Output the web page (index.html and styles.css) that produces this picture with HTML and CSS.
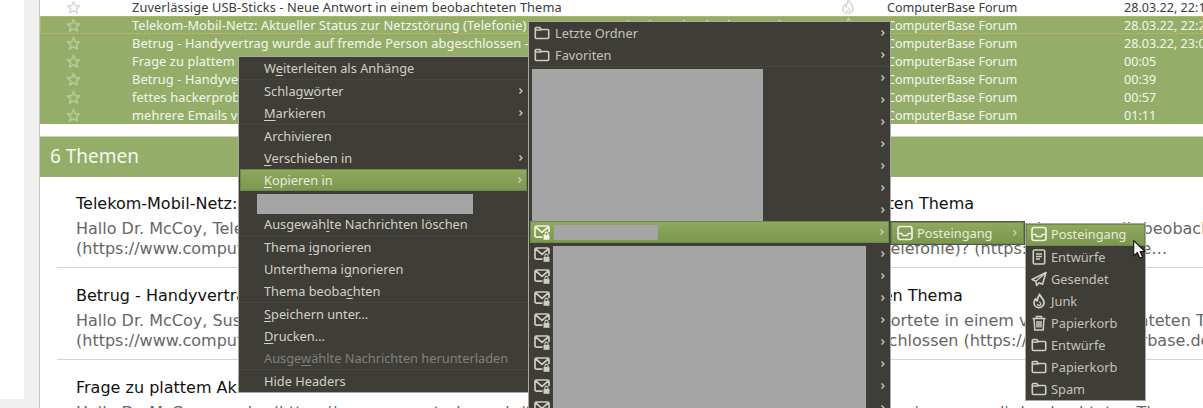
FILE: index.html
```html
<!DOCTYPE html>
<html lang="de">
<head>
<meta charset="utf-8">
<title>Thunderbird</title>
<link rel="stylesheet" href="styles.css">
</head>
<body>
<svg class="defs" width="0" height="0">
  <symbol id="star" viewBox="0 0 16 16"><path d="M8 1.6l1.9 4.3 4.6.4-3.5 3 1.1 4.6L8 11.4l-4.1 2.5L5 9.300 1.500 6.300l4.600-.4z" fill="none" stroke="currentColor" stroke-width="1.900" stroke-linejoin="round"/></symbol>
  <symbol id="flame" viewBox="0 0 16 16"><path d="M8.500 1.200c.5 2.600 4.500 4.300 4.500 8.500a5 5 0 0 1-10 0c0-1.700.8-3 1.800-4 .1 1.200.7 2 1.500 2.300C6.500 6 7 3.500 8.500 1.200z" fill="none" stroke="currentColor" stroke-width="1.800" stroke-linejoin="round"/><path d="M6.300 11a1.800 1.800 0 0 0 3.500 0c0-1-.9-1.500-1.500-2.300" fill="none" stroke="currentColor" stroke-width="1.200"/></symbol>
  <symbol id="folder" viewBox="0 0 16 16"><path d="M1.300 3.500a1 1 0 0 1 1-1h3.500l1.400 2h6.500a1 1 0 0 1 1 1v7a1 1 0 0 1-1 1H2.300a1 1 0 0 1-1-1zM1.500 5h6" fill="none" stroke="currentColor" stroke-width="1.600"/></symbol>
  <symbol id="mail" viewBox="0 0 16 16"><path d="M8.500 13.200H2.500a1.500 1.500 0 0 1-1.500-1.500V3.500A1.500 1.500 0 0 1 2.500 2h11A1.500 1.500 0 0 1 15 3.500V8M1.800 3L8 8.300 14.200 3" fill="none" stroke="currentColor" stroke-width="1.700"/><path d="M9.500 11h6v4.800h-6z" fill="currentColor"/><path d="M11 11V9.700a1.500 1.500 0 0 1 3 0V11" fill="none" stroke="currentColor" stroke-width="1.200"/></symbol>
  <symbol id="inbox" viewBox="0 0 16 16"><rect x="1" y="1.500" width="14" height="13" rx="2.400" fill="none" stroke="currentColor" stroke-width="1.700"/><path d="M1.500 8.500h3.200l1.100 2h4.400l1.100-2h3.200" fill="none" stroke="currentColor" stroke-width="1.500"/></symbol>
  <symbol id="draft" viewBox="0 0 16 16"><rect x="2.300" y="1" width="11.400" height="14" rx="1.300" fill="none" stroke="currentColor" stroke-width="1.600"/><path d="M5 5h6M5 7.500h6M5 10h4" stroke="currentColor" stroke-width="1.300"/></symbol>
  <symbol id="send" viewBox="0 0 16 16"><path d="M15 1.500L1 8.500l4 1.800.6 4.200 2.600-2.800 3.300 1.500z" fill="none" stroke="currentColor" stroke-width="1.600" stroke-linejoin="round"/><path d="M15 1.500L5 10.300" stroke="currentColor" stroke-width="1.300"/></symbol>
  <symbol id="trash" viewBox="0 0 16 16"><path d="M1.500 3.500h13M5.500 3.500V1.500h5v2M3 3.500l.8 11.500h8.400L13 3.500M6 6v6.500M8 6v6.500M10 6v6.500" fill="none" stroke="currentColor" stroke-width="1.500"/></symbol>
  <symbol id="chev" viewBox="0 0 8 8"><path d="M2.500 1.500L5 4 2.500 6.500" fill="none" stroke="currentColor" stroke-width="1.300"/></symbol>
</svg>

<div class="app">
  <aside class="sidebar"><div class="sidebar-foot"></div></aside>
  <div class="gutter"></div>
  <main class="main">
    <div class="rows">
      <div class="row"><svg class="star"><use href="#star"/></svg><span class="subject">Zuverlässige USB-Sticks - Neue Antwort in einem beobachteten Thema</span><svg class="flame"><use href="#flame"/></svg><span class="sender">ComputerBase Forum</span><span class="date">28.03.22, 22:17</span></div>
      <div class="row sel focus"><svg class="star"><use href="#star"/></svg><span class="subject">Telekom-Mobil-Netz: Aktueller Status zur Netzstörung (Telefonie) - Neue Antwort in einem beobachteten Thema</span><svg class="flame"><use href="#flame"/></svg><span class="sender">ComputerBase Forum</span><span class="date">28.03.22, 22:21</span></div>
      <div class="row sel"><svg class="star"><use href="#star"/></svg><span class="subject">Betrug - Handyvertrag wurde auf fremde Person abgeschlossen - Neue Antwort in einem beobachteten Thema</span><span class="flame"></span><span class="sender">ComputerBase Forum</span><span class="date">28.03.22, 23:04</span></div>
      <div class="row sel"><svg class="star"><use href="#star"/></svg><span class="subject">Frage zu plattem Akku - Neue Antwort</span><span class="flame"></span><span class="sender">ComputerBase Forum</span><span class="date">00:05</span></div>
      <div class="row sel"><svg class="star"><use href="#star"/></svg><span class="subject">Betrug - Handyvertrag - Neue Antwort</span><span class="flame"></span><span class="sender">ComputerBase Forum</span><span class="date">00:39</span></div>
      <div class="row sel"><svg class="star"><use href="#star"/></svg><span class="subject">fettes hackerproblem - Neue Antwort</span><span class="flame"></span><span class="sender">ComputerBase Forum</span><span class="date">00:57</span></div>
      <div class="row sel"><svg class="star"><use href="#star"/></svg><span class="subject">mehrere Emails versendet - Neue Antwort</span><span class="flame"></span><span class="sender">ComputerBase Forum</span><span class="date">01:11</span></div>
    </div>
    <h2 class="count">6 Themen</h2>
    <article class="thread">
      <h3>Telekom-Mobil-Netz: Aktueller Status zur Netzstörung (Telefonie)&nbsp;&nbsp;- Neue Antwort in einem beobachteten Thema</h3>
      <p>Hallo Dr. McCoy, Telekom-Mobil-Netz: Aktueller Status zur Netzstörung (Telefonie) hat im Forum ja kurz geantwortet in einem von dir beobachteten Thema<br>(https://www.computerbase.de/forum/threads/telekom-mobil-netz-aktueller-status-netzstoerung-s-in-Telefonie)? (https://www.compute…</p>
    </article>
    <article class="thread">
      <h3>Betrug - Handyvertrag wurde auf fremde Person abgeschlossen - Neue Antwort in einem beobachteten Thema</h3>
      <p>Hallo Dr. McCoy, Susi hat in einem Beitrag geantwortet und es wurde im Forum heute dazu ja beantwortete in einem von dir beobachteten Thema<br>(https://www.computerbase.de/forum/threads/betrug-handyvertrag-wurde-auf-fremde-person-i-abgeschlossen (https://www.computerbase.de/forum</p>
    </article>
    <article class="thread">
      <h3>Frage zu plattem Akku - Neue Antwort in einem beobachteten Thema</h3>
      <p>Hallo Dr. McCoy, sascha (https://www.computerbase.de/forum/members/sascha.123456) antwortete in einem von dir beobachteten Thema</p>
    </article>
  </main>
</div>

<div class="menu menu-main">
  <div class="mi sep"><span>W<u>e</u>iterleiten als Anhänge</span></div>
  <div class="mi"><span>Schlag<u>w</u>örter</span><svg class="chev"><use href="#chev"/></svg></div>
  <div class="mi sep"><span><u>M</u>arkieren</span><svg class="chev"><use href="#chev"/></svg></div>
  <div class="mi"><span>Archivieren</span></div>
  <div class="mi"><span><u>V</u>erschieben in</span><svg class="chev"><use href="#chev"/></svg></div>
  <div class="mi hot"><span><u>K</u>opieren in</span><svg class="chev"><use href="#chev"/></svg></div>
  <div class="mi"></div>
  <div class="mi sep"><span>Ausgewäh<u>l</u>te Nachrichten löschen</span></div>
  <div class="mi"><span>Thema <u>i</u>gnorieren</span></div>
  <div class="mi"><span>Unterthema i<u>g</u>norieren</span></div>
  <div class="mi sep"><span>Thema beoba<u>c</u>hten</span></div>
  <div class="mi"><span><u>S</u>peichern unter…</span></div>
  <div class="mi"><span><u>D</u>rucken…</span></div>
  <div class="mi sep off"><span>Ausge<u>w</u>ählte Nachrichten herunterladen</span></div>
  <div class="mi"><span>Hide Headers</span></div>
  <div class="redact r-main"></div>
</div>

<div class="menu menu-acct">
  <div class="mi"><svg class="ico"><use href="#folder"/></svg><span>Letzte Ordner</span><svg class="chev"><use href="#chev"/></svg></div>
  <div class="mi sep"><svg class="ico"><use href="#folder"/></svg><span>Favoriten</span><svg class="chev"><use href="#chev"/></svg></div>
  <div class="mi"><svg class="chev"><use href="#chev"/></svg></div>
  <div class="mi"><svg class="chev"><use href="#chev"/></svg></div>
  <div class="mi"><svg class="chev"><use href="#chev"/></svg></div>
  <div class="mi"><svg class="chev"><use href="#chev"/></svg></div>
  <div class="mi"><svg class="chev"><use href="#chev"/></svg></div>
  <div class="mi"><svg class="chev"><use href="#chev"/></svg></div>
  <div class="mi"><svg class="chev"><use href="#chev"/></svg></div>
  <div class="mi hot"><svg class="ico"><use href="#mail"/></svg><svg class="chev"><use href="#chev"/></svg></div>
  <div class="mi"><svg class="ico"><use href="#mail"/></svg><svg class="chev"><use href="#chev"/></svg></div>
  <div class="mi"><svg class="ico"><use href="#mail"/></svg><svg class="chev"><use href="#chev"/></svg></div>
  <div class="mi"><svg class="ico"><use href="#mail"/></svg><svg class="chev"><use href="#chev"/></svg></div>
  <div class="mi"><svg class="ico"><use href="#mail"/></svg><svg class="chev"><use href="#chev"/></svg></div>
  <div class="mi"><svg class="ico"><use href="#mail"/></svg><svg class="chev"><use href="#chev"/></svg></div>
  <div class="mi"><svg class="ico"><use href="#mail"/></svg><svg class="chev"><use href="#chev"/></svg></div>
  <div class="mi"><svg class="ico"><use href="#mail"/></svg><svg class="chev"><use href="#chev"/></svg></div>
  <div class="mi"><svg class="ico"><use href="#mail"/></svg><svg class="chev"><use href="#chev"/></svg></div>
  <div class="redact r-top"></div>
  <div class="redact r-hot"></div>
  <div class="redact r-list"></div>
</div>

<div class="menu menu-sub">
  <div class="mi hot"><svg class="ico"><use href="#inbox"/></svg><span>Posteingang</span><svg class="chev"><use href="#chev"/></svg></div>
</div>

<div class="menu menu-folders">
  <div class="mi hot"><svg class="ico"><use href="#inbox"/></svg><span>Posteingang</span></div>
  <div class="mi"><svg class="ico"><use href="#draft"/></svg><span>Entwürfe</span></div>
  <div class="mi"><svg class="ico"><use href="#send"/></svg><span>Gesendet</span></div>
  <div class="mi"><svg class="ico"><use href="#flame"/></svg><span>Junk</span></div>
  <div class="mi"><svg class="ico"><use href="#trash"/></svg><span>Papierkorb</span></div>
  <div class="mi"><svg class="ico"><use href="#folder"/></svg><span>Entwürfe</span></div>
  <div class="mi"><svg class="ico"><use href="#folder"/></svg><span>Papierkorb</span></div>
  <div class="mi"><svg class="ico"><use href="#folder"/></svg><span>Spam</span></div>
</div>

<svg class="cursor" viewBox="0 0 13 19"><path d="M.7.700v15.200l3.700-3.400 2.400 5.600 2.700-1.200-2.400-5.400h5z" fill="#fff" stroke="#111" stroke-width="1.100" stroke-linejoin="round"/></svg>
</body>
</html>
```
FILE: styles.css
```css
* { box-sizing: border-box; }
html, body { margin: 0; height: 408px; overflow: hidden; background: #fff; }
body { position: relative; font-family: "Noto Sans", sans-serif; }
.defs { position: absolute; }

.app { display: flex; height: 408px; overflow: hidden; }
.sidebar { width: 24px; flex: none; display: flex; flex-direction: column; justify-content: flex-end; background: #fff; }
.sidebar-foot { height: 9px; background: #f0f0f0; }
.gutter { width: 16px; flex: none; background: #f0f0f0; border-right: 1px solid #c6c6c6; }
.main { flex: 1; min-width: 0; overflow: hidden; background: #fff; }

.rows { margin-top: -2px; }
.row { display: flex; align-items: center; height: 18px; font-size: 12.600px; color: #3c3c3c; white-space: nowrap; }
.row.sel { background: #94ae6a; color: #f4f6ee; }
.row.focus { outline: 1px dotted #d8b860; outline-offset: -1px; }
.star { width: 15px; height: 15px; margin-left: 26px; flex: none; color: #dcdcdc; }
.row.sel .star { color: #b4c795; }
.subject { width: 708px; margin-left: 51px; flex: none; overflow: hidden; font-size: 12.800px; letter-spacing: .1px; }
.flame { width: 16px; height: 16px; flex: none; color: #dadada; }
.row.sel .flame { color: #b4c795; }
.sender { width: 237px; margin-left: 31px; flex: none; }
.date { flex: none; }

.count { margin: 12px 0 0; height: 41px; padding-left: 10px; border-top: 1px solid #cfcfcf; background: #94ae6a; color: #f6f8f0; font-size: 19px; font-weight: 400; line-height: 39px; }

.thread { margin-left: 17px; height: 92px; padding: 18px 0 0 19px; border-bottom: 1px solid #d4d4d4; white-space: nowrap; overflow: hidden; font-family: "DejaVu Sans", sans-serif; }
.count + .thread { height: 91px; padding-top: 17px; }
.thread h3 { margin: 0; font-size: 16px; font-weight: 400; line-height: 20px; color: #111; }
.thread p { margin: 5px 0 0; font-size: 16px; line-height: 20px; color: #666; }

.menu { position: absolute; background: #3f3d38; border: 1px solid #a9a89f; font-size: 12.800px; color: #d2d0c6; overflow: hidden; }
.mi { position: relative; display: flex; align-items: center; height: 22px; white-space: nowrap; }
.mi.sep { height: 23px; border-bottom: 1px solid #474540; }
.mi.hot { background: linear-gradient(#8fa95d, #7b9650); box-shadow: inset 0 0 0 1px #6f8a47; color: #e8ebdc; }
.mi.off { color: #82807a; }
.mi u { text-underline-offset: 2px; }
.ico { width: 16px; height: 16px; flex: none; color: #cfcdc2; }
.mi.hot .ico { color: #eef0e4; }
.chev { position: absolute; right: 3px; top: 7px; width: 8px; height: 8px; color: #cfcdc2; }
.redact { position: absolute; background: #a5a5a5; }

.menu-main { left: 238px; top: 56px; width: 291px; height: 337px; }
.menu-main .mi { padding-left: 25px; padding-right: 4px; }
.menu-main .mi.hot { margin: 0 1px; padding-left: 24px; }
.r-main { left: 18px; top: 137px; width: 216px; height: 20px; }

.menu-acct { left: 528px; top: 21px; width: 363px; height: 400px; color: #c4c2b8; }
.menu-acct .mi { padding-left: 5px; gap: 5px; }
.menu-acct .mi.hot { margin: 0 1px; padding-left: 4px; }
.r-top { left: 3px; top: 47px; width: 231px; height: 152px; }
.r-hot { left: 25px; top: 203px; width: 104px; height: 15px; }
.r-list { left: 24px; top: 224px; width: 313px; height: 170px; }

.menu-sub { left: 890px; top: 221px; width: 135px; height: 24px; border-color: #55554d; }
.menu-sub .mi { padding-left: 6px; gap: 4px; }
.menu-sub .chev { right: 5px; }

.menu-folders { left: 1025px; top: 223px; width: 121px; height: 178px; color: #c4c2b8; }
.menu-folders .mi { padding-left: 5px; gap: 4px; }
.menu-folders .mi.hot { padding-bottom: 2px; color: #e8ebdc; }

.cursor { position: absolute; left: 1133px; top: 240px; width: 13px; height: 19px; }
```
